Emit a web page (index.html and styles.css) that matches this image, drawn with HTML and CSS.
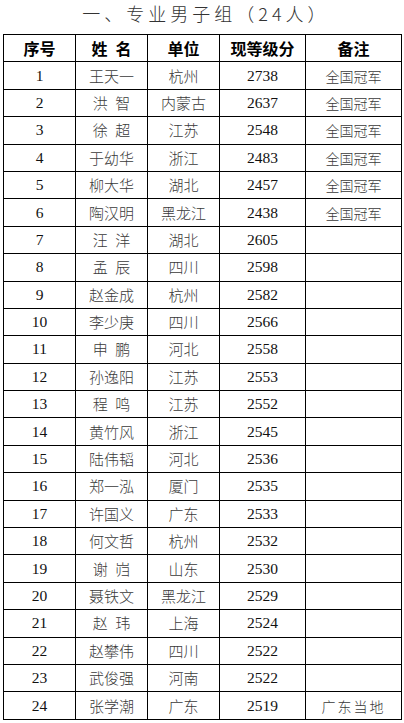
FILE: index.html
```html
<!DOCTYPE html>
<html lang="zh">
<head>
<meta charset="utf-8">
<link rel="stylesheet" href="styles.css">
</head>
<body>
<div class="page">
<h1 class="title">一、专业男子组（24人）</h1>
<table class="rank">
<colgroup>
<col class="c1"><col class="c2"><col class="c3"><col class="c4"><col class="c5">
</colgroup>
<thead>
<tr><th>序号</th><th>姓&ensp;名</th><th>单位</th><th>现等级分</th><th>备注</th></tr>
</thead>
<tbody>
<tr><td class="n">1</td><td>王天一</td><td>杭州</td><td class="n">2738</td><td class="note">全国冠军</td></tr>
<tr><td class="n">2</td><td>洪&ensp;智</td><td>内蒙古</td><td class="n">2637</td><td class="note">全国冠军</td></tr>
<tr><td class="n">3</td><td>徐&ensp;超</td><td>江苏</td><td class="n">2548</td><td class="note">全国冠军</td></tr>
<tr><td class="n">4</td><td>于幼华</td><td>浙江</td><td class="n">2483</td><td class="note">全国冠军</td></tr>
<tr><td class="n">5</td><td>柳大华</td><td>湖北</td><td class="n">2457</td><td class="note">全国冠军</td></tr>
<tr><td class="n">6</td><td>陶汉明</td><td>黑龙江</td><td class="n">2438</td><td class="note">全国冠军</td></tr>
<tr><td class="n">7</td><td>汪&ensp;洋</td><td>湖北</td><td class="n">2605</td><td></td></tr>
<tr><td class="n">8</td><td>孟&ensp;辰</td><td>四川</td><td class="n">2598</td><td></td></tr>
<tr><td class="n">9</td><td>赵金成</td><td>杭州</td><td class="n">2582</td><td></td></tr>
<tr><td class="n">10</td><td>李少庚</td><td>四川</td><td class="n">2566</td><td></td></tr>
<tr><td class="n">11</td><td>申&ensp;鹏</td><td>河北</td><td class="n">2558</td><td></td></tr>
<tr><td class="n">12</td><td>孙逸阳</td><td>江苏</td><td class="n">2553</td><td></td></tr>
<tr><td class="n">13</td><td>程&ensp;鸣</td><td>江苏</td><td class="n">2552</td><td></td></tr>
<tr><td class="n">14</td><td>黄竹风</td><td>浙江</td><td class="n">2545</td><td></td></tr>
<tr><td class="n">15</td><td>陆伟韬</td><td>河北</td><td class="n">2536</td><td></td></tr>
<tr><td class="n">16</td><td>郑一泓</td><td>厦门</td><td class="n">2535</td><td></td></tr>
<tr><td class="n">17</td><td>许国义</td><td>广东</td><td class="n">2533</td><td></td></tr>
<tr><td class="n">18</td><td>何文哲</td><td>杭州</td><td class="n">2532</td><td></td></tr>
<tr><td class="n">19</td><td>谢&ensp;岿</td><td>山东</td><td class="n">2530</td><td></td></tr>
<tr><td class="n">20</td><td>聂铁文</td><td>黑龙江</td><td class="n">2529</td><td></td></tr>
<tr><td class="n">21</td><td>赵&ensp;玮</td><td>上海</td><td class="n">2524</td><td></td></tr>
<tr><td class="n">22</td><td>赵攀伟</td><td>四川</td><td class="n">2522</td><td></td></tr>
<tr><td class="n">23</td><td>武俊强</td><td>河南</td><td class="n">2522</td><td></td></tr>
<tr><td class="n">24</td><td>张学潮</td><td>广东</td><td class="n">2519</td><td class="note wide">广东当地</td></tr>
</tbody>
</table>
</div>
</body>
</html>
```
FILE: styles.css
```css
html, body {
  margin: 0;
  padding: 0;
  background: #fff;
}
.page {
  width: 404px;
  padding: 0 3px;
  box-sizing: border-box;
  font-family: "Liberation Serif", "Noto Sans CJK SC", serif;
}
.title {
  margin: 0;
  height: 34px;
  line-height: 27px;
  text-align: center;
  font-family: "Noto Sans CJK SC", sans-serif;
  font-weight: 300;
  font-size: 18px;
  letter-spacing: 4px;
  color: #333;
  padding-left: 8px;
}
.rank {
  width: 398px;
  border-collapse: collapse;
  table-layout: fixed;
}
.c1 { width: 72px; }
.c2 { width: 72px; }
.c3 { width: 72px; }
.c4 { width: 86px; }
.c5 { width: 96px; }
.rank th, .rank td {
  border: 1px solid #000;
  padding: 0;
  text-align: center;
  height: 26.4px;
  line-height: 20px;
}
.rank th {
  font-family: "Noto Sans CJK SC", sans-serif;
  font-weight: 700;
  font-size: 16px;
  color: #000;
}
.rank td {
  font-family: "Noto Sans CJK SC", sans-serif;
  font-weight: 300;
  font-size: 15px;
  color: #3a3a3a;
}
.rank td.n {
  font-family: "Liberation Serif", serif;
  font-weight: 400;
  font-size: 15.5px;
  color: #111;
}
.rank td.note {
  font-size: 14px;
}
.rank td.wide {
  letter-spacing: 2px;
}
```
